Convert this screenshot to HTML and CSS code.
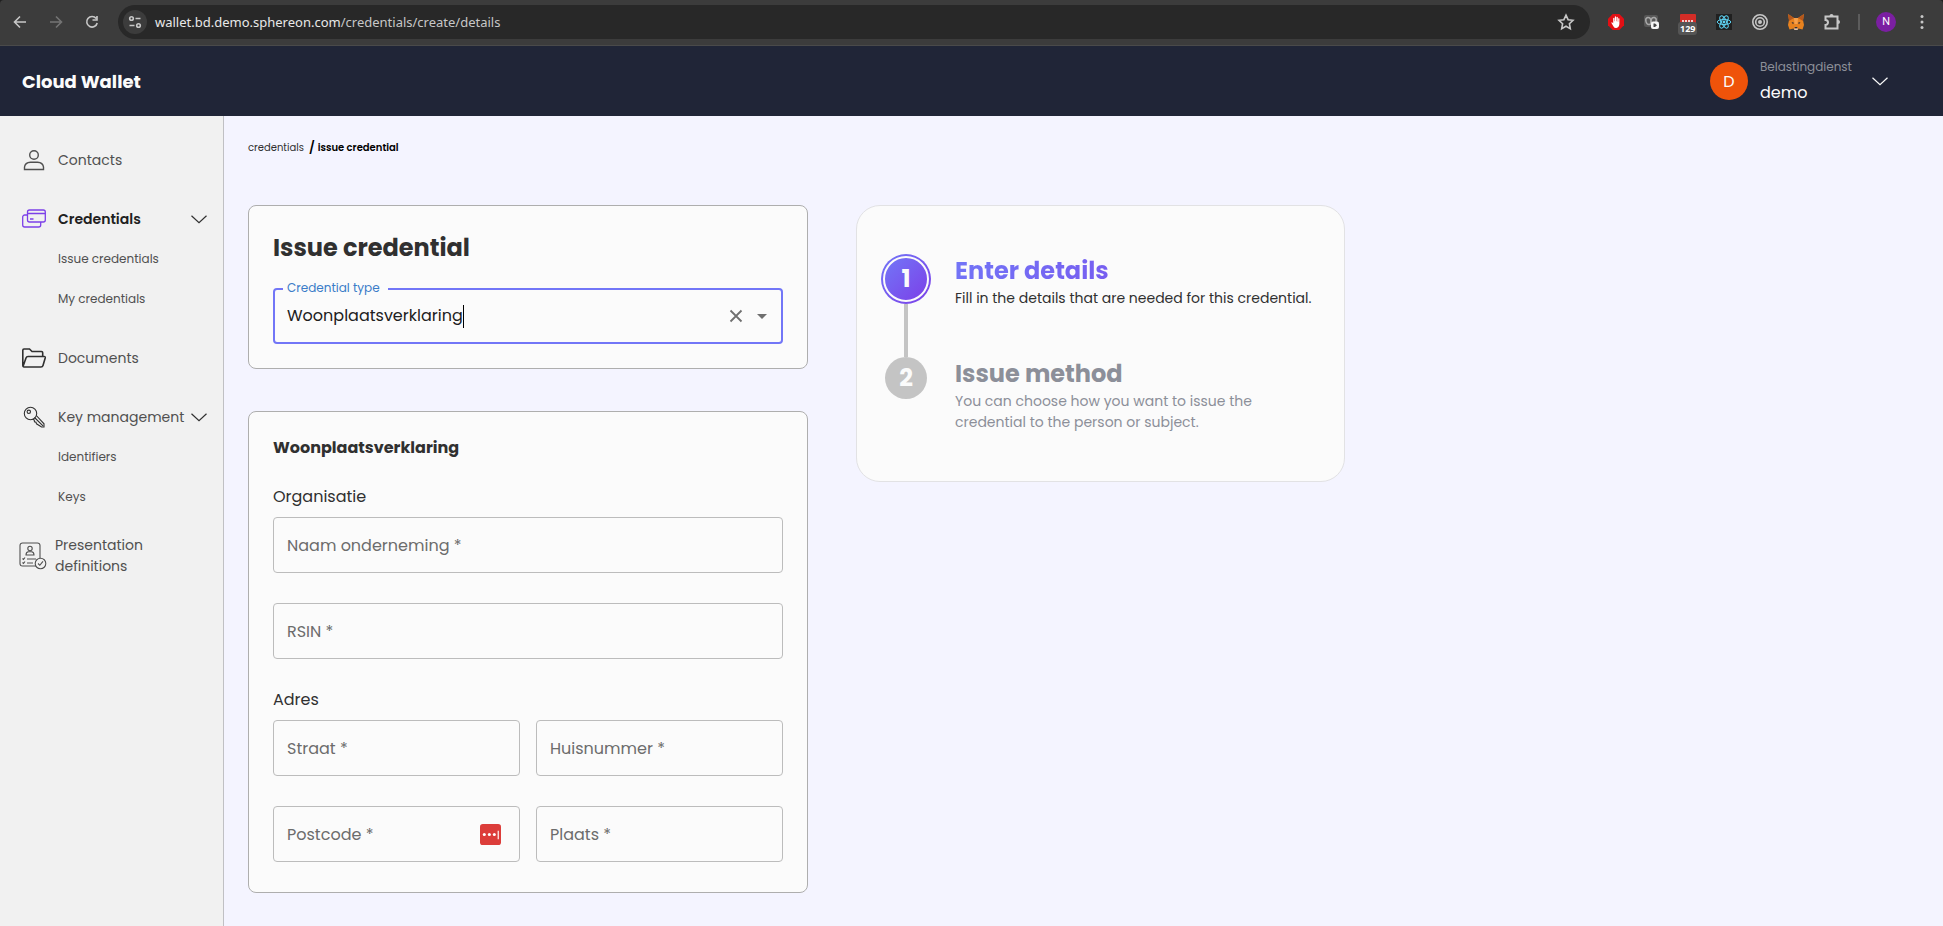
FILE: index.html
```html
<!DOCTYPE html>
<html lang="en">
<head>
<meta charset="utf-8">
<title>Cloud Wallet</title>
<link rel="stylesheet" href="styles.css">
</head>
<body>
<div class="browser">
  <div class="toolbar">
    <button class="tool" aria-label="Back"><svg viewBox="0 0 20 20"><path d="M16 10H5M10 4.500 4.500 10l5.500 5.500"/></svg></button>
    <button class="tool tool-off" aria-label="Forward" disabled><svg viewBox="0 0 20 20"><path d="M4 10h11M10 4.500l5.500 5.500-5.500 5.500"/></svg></button>
    <button class="tool" aria-label="Reload"><svg viewBox="0 0 20 20"><path d="M14.200 6.500A5.300 5.300 0 1 0 15.200 11M15 4v4h-4.500"/></svg></button>
    <div class="omnibox">
      <button class="site" aria-label="Site information"><svg viewBox="0 0 20 20"><circle cx="6.500" cy="6.500" r="1.800"/><path d="M10.500 6.500h5M4.500 13.500h5"/><circle cx="13.500" cy="13.500" r="1.800"/></svg></button>
      <div class="url"><span class="host">wallet.bd.demo.sphereon.com</span>/credentials/create/details</div>
      <button class="tool" aria-label="Bookmark"><svg viewBox="0 0 20 20"><path class="star" d="M10 3.200l2.100 4.500 4.900.600-3.600 3.400.900 4.900-4.300-2.400-4.300 2.400.900-4.900L3 8.300l4.900-.600z"/></svg></button>
    </div>
    <button class="tool" aria-label="Ad blocker"><svg class="solid" viewBox="0 0 20 20"><path fill="#e30f14" d="M6.700 2h6.600L18 6.700v6.600L13.300 18H6.700L2 13.300V6.700z"/><path fill="#fff" d="M7.500 14.500 5.300 10.800q.4-1 1.400 0l.5.700V6.200q.6-.9 1.200 0v3h.4V4.800q.7-.9 1.300 0v4.400h.4V5.200q.7-.8 1.300 0v4.500h.4V6.600q.6-.8 1.200 0v5.400q-.3 3.600-3 4-2 .2-2.900-1.500z"/></svg></button>
    <button class="tool" aria-label="Extension"><svg class="solid" viewBox="0 0 20 20"><rect x="2" y="3" width="14" height="12" rx="2" fill="#575757"/><g fill="none" stroke="#a8a8a8" stroke-width="1.500"><ellipse cx="6.500" cy="9" rx="2.600" ry="3.600" transform="rotate(-15 6.500 9)"/><ellipse cx="11.500" cy="9" rx="2.600" ry="3.600" transform="rotate(15 11.500 9)"/></g><rect x="9" y="9.500" width="8" height="7.500" rx="2" fill="#f5f5f5"/><path fill="#444" d="M11.500 11.500h1.500l2 1.800-2 1.800h-1.500z"/></svg></button>
    <button class="tool counter" aria-label="Password manager, 129"><svg class="solid" viewBox="0 0 20 20"><rect x="2" y="2" width="16" height="16" rx="1" fill="#d32d27"/><path stroke="#fff" stroke-dasharray="2 1" d="M4 9h11"/></svg><span class="count">129</span></button>
    <button class="tool" aria-label="React tools"><svg class="solid" viewBox="0 0 20 20"><path fill="#202020" d="M2 2h16v16H2z"/><g fill="none" stroke="#5ed3f3" stroke-width="1"><ellipse cx="10" cy="10" rx="6.800" ry="2.600"/><ellipse cx="10" cy="10" rx="6.800" ry="2.600" transform="rotate(60 10 10)"/><ellipse cx="10" cy="10" rx="6.800" ry="2.600" transform="rotate(120 10 10)"/></g><circle cx="10" cy="10" r="1.400" fill="#5ed3f3"/></svg></button>
    <button class="tool" aria-label="Target extension"><svg viewBox="0 0 20 20"><circle cx="10" cy="10" r="7.200"/><circle cx="10" cy="10" r="4.300"/><circle cx="10" cy="10" r="1.200" fill="#c7c7c7"/></svg></button>
    <button class="tool" aria-label="Fox wallet"><svg class="solid" viewBox="0 0 20 20"><path fill="#e8821e" d="M2 2l6 4h4l6-4-1 6 1 5-1.500 4.500-4-1-1 1.500h-3l-1-1.500-4 1L2 13l1-5z"/><path fill="#b5571c" d="M2 2l6 4-5 3zM18 2l-6 4 5 3z"/><path fill="#f6a04c" d="M8 6h4l-.5 6h-3z"/><path fill="#2e2e3a" d="M5.500 10l2.500.8L7 12.300zM14.500 10l-2.500.8 1 1.500zM8.700 15h2.600v1.500H8.700z"/><path fill="#d9c4b3" d="M8 16.500h4l-.5 1.500h-3z"/></svg></button>
    <button class="tool" aria-label="Extensions"><svg viewBox="0 0 20 20"><path class="bold" d="M3.500 4.500h12v12h-12V13a2.400 2.400 0 0 0 0-5z"/><path fill="#c7c7c7" stroke="none" d="M7.500 4a2 2 0 0 1 4 0zM16 8a2 2 0 0 1 0 4z"/></svg></button>
    <span class="rule"></span>
    <button class="profile" aria-label="Profile">N</button>
    <button class="tool" aria-label="Menu"><svg class="solid" viewBox="0 0 20 20"><g fill="#c7c7c7"><circle cx="10" cy="4.500" r="1.500"/><circle cx="10" cy="10" r="1.500"/><circle cx="10" cy="15.500" r="1.500"/></g></svg></button>
  </div>
</div>

<header class="header">
  <div class="brand">Cloud Wallet</div>
  <div class="user">
    <span class="avatar">D</span>
    <div class="who"><span class="org">Belastingdienst</span><span class="name">demo</span></div>
    <button class="more" aria-label="Account menu"><svg class="chev" viewBox="0 0 16 9"><path d="M0.500 0.800 8 7.800l7.500-7"/></svg></button>
  </div>
</header>

<div class="shell">
  <nav class="side">
    <div class="group">
      <a class="item" href="#"><svg class="icon" viewBox="0 0 24 24"><circle cx="12" cy="7" r="4.300"/><path d="M2.500 21.500v-2.500q.5-4.500 6-4.800h7q5.500.3 6 4.800v2.500z"/></svg>Contacts</a>
    </div>
    <div class="group">
      <a class="item current" href="#"><svg class="icon violet" viewBox="0 0 24 24"><rect x="5.500" y="3" width="17.800" height="12" rx="2"/><path d="M5.500 6.500h17.800M8 12h3.500M5.500 8H2.700a2 2 0 0 0-2 2v8a2 2 0 0 0 2 2h14a2 2 0 0 0 2-2v-3"/></svg>Credentials<svg class="chev" viewBox="0 0 16 9"><path d="M0.500 0.800 8 7.800l7.500-7"/></svg></a>
      <a class="sub" href="#">Issue credentials</a>
      <a class="sub" href="#">My credentials</a>
    </div>
    <div class="group">
      <a class="item" href="#"><svg class="icon dark" viewBox="0 0 24 24"><path d="M.800 19V4.200a1.200 1.200 0 0 1 1.200-1.200h5.500l2.500 2.500h9.500a1.200 1.200 0 0 1 1.200 1.200V10M1 20.500 4 12q.5-1.500 2-1.500h16q1.600 0 1.200 1.500L21 19.500q-.4 1.500-2 1.500H2q-1.200 0-1.200-2"/></svg>Documents</a>
    </div>
    <div class="group">
      <a class="item" href="#"><svg class="icon thin" viewBox="0 0 24 24"><circle cx="8.500" cy="8.500" r="6.200"/><circle cx="6.800" cy="6.800" r="1.700"/><path d="M10.500 14.300l1.700.7.300 1.800 1.500.5.500 1.500 5 3.200h2.500v-3.200L14.300 10.500M12.500 12.500l8.500 8.300"/></svg>Key management<svg class="chev" viewBox="0 0 16 9"><path d="M0.500 0.800 8 7.800l7.500-7"/></svg></a>
      <a class="sub" href="#">Identifiers</a>
      <a class="sub" href="#">Keys</a>
    </div>
    <div class="group">
      <a class="item wide" href="#"><svg class="icon large" viewBox="0 0 28 28"><path d="M17 24H3.500A2.500 2.500 0 0 1 1 21.500v-18A2.500 2.500 0 0 1 3.500 1h15A2.500 2.500 0 0 1 21 3.500V16"/><circle cx="11" cy="6.500" r="2.200"/><path d="M7 13q0-3 2.500-3.200h3Q15 10 15 13zM3.500 16.500l1 1 1.500-2M8 17h9M3.500 20.500l1 1 1.500-2M8 21h6"/><circle cx="21.500" cy="21.500" r="5.300"/><path d="M19 21.500l1.800 1.800 3.200-4"/></svg><span>Presentation definitions</span></a>
    </div>
  </nav>

  <main class="main">
    <div class="crumbs"><a href="#">credentials</a><span class="slash">/</span><strong>issue credential</strong></div>
    <div class="columns">
      <form class="form">
        <section class="card">
          <h1 class="title">Issue credential</h1>
          <div class="combo">
            <label class="float" for="type">Credential type</label>
            <input class="value" id="type" type="text" value="Woonplaatsverklaring">
            <span class="caret"></span>
            <button class="clear" type="button" aria-label="Clear"><svg viewBox="0 0 20 20"><path d="M4.500 4.500l11 11M15.500 4.500l-11 11" fill="none" stroke="#6f6f6f" stroke-width="1.800"/></svg></button>
            <button class="clear" type="button" aria-label="Open"><svg viewBox="0 0 20 20"><path d="M5 8h10l-5 5z" fill="#6f6f6f"/></svg></button>
          </div>
        </section>
        <section class="card details">
          <h2 class="subtitle">Woonplaatsverklaring</h2>
          <fieldset class="fields">
            <legend class="legend">Organisatie</legend>
            <div class="field full"><input id="naam" type="text" placeholder=" "><label for="naam">Naam onderneming *</label></div>
            <div class="field full"><input id="rsin" type="text" placeholder=" "><label for="rsin">RSIN *</label></div>
          </fieldset>
          <fieldset class="fields">
            <legend class="legend">Adres</legend>
            <div class="field"><input id="straat" type="text" placeholder=" "><label for="straat">Straat *</label></div>
            <div class="field"><input id="nummer" type="text" placeholder=" "><label for="nummer">Huisnummer *</label></div>
            <div class="field"><input id="postcode" type="text" placeholder=" "><label for="postcode">Postcode *</label><button class="fill" type="button" aria-label="Fill in"><svg viewBox="0 0 22 22"><rect width="22" height="22" rx="3" fill="#dc3d3a"/><g fill="#fff"><circle cx="4.500" cy="11" r="1.600"/><circle cx="9.800" cy="11" r="1.600"/><circle cx="15" cy="11" r="1.600"/><path d="M18.500 7h1.200v9h-1.200z"/></g></svg></button></div>
            <div class="field"><input id="plaats" type="text" placeholder=" "><label for="plaats">Plaats *</label></div>
          </fieldset>
        </section>
      </form>
      <ol class="steps">
        <li class="step active">
          <div class="track"><span class="ring"><span class="dot">1</span></span></div>
          <div class="text"><h3>Enter details</h3><p>Fill in the details that are needed for this credential.</p></div>
        </li>
        <li class="step">
          <div class="track"><span class="dot">2</span></div>
          <div class="text"><h3>Issue method</h3><p>You can choose how you want to issue the credential to the person or subject.</p></div>
        </li>
      </ol>
    </div>
  </main>
</div>
</body>
</html>
```

FILE: styles.css
```css
* { box-sizing: border-box; }
body {
  margin: 0;
  min-height: 100vh;
  display: flex;
  flex-direction: column;
  font-family: Poppins, Inter, "Open Sans", sans-serif;
  font-size: 16px;
  color: #303030;
  background: #f4f4ff;
}
button { border: 0; padding: 0; background: none; font: inherit; color: inherit; }
a { color: inherit; text-decoration: none; }
svg { display: block; }
h1, h2, h3, p { margin: 0; }

/* Browser toolbar */
.browser { background: #1f1f1f; }
.toolbar {
  display: flex;
  align-items: center;
  gap: 16px;
  height: 46px;
  padding: 0 11px 2px 10px;
  background: #3c3c3c;
  border-bottom: 1px solid #4a4a4a;
  border-radius: 4px 4px 0 0;
}
.tool { position: relative; flex: none; width: 20px; height: 20px; }
.toolbar svg { width: 20px; height: 20px; fill: none; stroke: #c7c7c7; stroke-width: 1.600; }
.toolbar .solid { stroke: none; }
.toolbar .bold { stroke-width: 2; }
.tool-off { opacity: 0.4; }
.omnibox {
  flex: 1;
  display: flex;
  align-items: center;
  height: 34px;
  padding: 0 14px 0 5px;
  border-radius: 17px;
  background: #282828;
}
.site {
  display: grid;
  place-items: center;
  width: 24px;
  height: 24px;
  margin-right: 8px;
  border-radius: 50%;
  background: #3c3c3c;
}
.url { flex: 1; font: 13px/20px "Noto Sans", sans-serif; color: #c7c7c7; }
.host { color: #e8e8e8; }
.count {
  position: absolute;
  top: 10px;
  left: 0;
  padding: 0 2px;
  border-radius: 3px;
  background: #555;
  color: #fff;
  font: bold 9px/13px "Open Sans", sans-serif;
}
.rule { width: 2px; height: 16px; background: #5c5c5c; }
.profile {
  width: 20px;
  height: 20px;
  border-radius: 50%;
  background: #7b1fa2;
  color: #fff;
  font-size: 11px;
}

/* App header */
.header {
  display: flex;
  align-items: center;
  justify-content: space-between;
  height: 70px;
  padding: 0 55px 0 22px;
  background: #202537;
  color: #fbfbfb;
}
.brand { font-size: 18px; font-weight: 700; }
.user { display: flex; align-items: center; }
.avatar {
  display: grid;
  place-items: center;
  width: 38px;
  height: 38px;
  margin-right: 12px;
  border-radius: 50%;
  background: #ef530a;
}
.who { display: flex; flex-direction: column; gap: 5px; margin-right: 20px; }
.org { font-size: 12px; line-height: 18px; color: #8d9099; }
.name { line-height: 24px; }
.chev { width: 16px; height: 9px; fill: none; stroke: currentColor; stroke-width: 1.200; }

/* Navigation */
.shell { flex: 1; display: flex; }
.side {
  flex: none;
  width: 224px;
  padding: 24px 16px 24px 22px;
  display: flex;
  flex-direction: column;
  gap: 19px;
  background: #f1f1f1;
  border-right: 1px solid #c0c0c4;
  color: #505050;
}
.item { display: flex; align-items: center; height: 40px; font-size: 14px; line-height: 21px; white-space: nowrap; }
.item .chev { margin-left: auto; color: #303030; }
.icon { flex: none; width: 24px; height: 24px; margin-right: 12px; fill: none; stroke: #505050; stroke-width: 1.400; }
.violet { stroke: #7c40e8; stroke-width: 1.300; }
.dark { stroke: #303030; stroke-width: 1.600; }
.thin { stroke: #303030; stroke-width: 1.100; }
.current { font-weight: 600; color: #202020; }
.sub { display: flex; align-items: center; height: 40px; padding-left: 36px; font-size: 12px; }
.wide { margin-left: -3px; white-space: normal; }
.large { width: 28px; height: 28px; margin-right: 8px; stroke-width: 1.100; }

/* Content */
.main { flex: 1; min-width: 0; padding: 23px 24px; }
.crumbs { display: flex; align-items: center; height: 18px; font-size: 10px; color: #303030; }
.crumbs strong { font-weight: 600; color: #000; }
.slash { margin: 0 3px 0 5px; font-size: 12px; font-weight: 600; color: #000; }
.columns { display: flex; align-items: flex-start; gap: 48px; margin-top: 48px; }
.form { flex: 0 1 560px; display: flex; flex-direction: column; gap: 42px; }
.card { padding: 24px; border: 1px solid #aeaeae; border-radius: 8px; background: #fbfbfb; }
.title { margin-bottom: 23px; font-size: 24px; line-height: 35px; font-weight: 700; }
.combo {
  position: relative;
  display: flex;
  align-items: center;
  height: 56px;
  padding: 0 9px 0 12px;
  border: 2px solid #7276f7;
  border-radius: 4px;
}
.float {
  position: absolute;
  top: -12px;
  left: 8px;
  padding: 0 8px 0 4px;
  background: #fbfbfb;
  font-size: 12px;
  line-height: 20px;
  color: #3a7cc8;
}
.value { field-sizing: content; min-width: 0; padding: 0; border: 0; outline: 0; background: none; font: inherit; line-height: 24px; color: #202020; }
.caret { width: 1px; height: 23px; margin-right: auto; background: #000; }
.clear { width: 20px; height: 20px; margin-left: 6px; }
.clear svg { width: 20px; height: 20px; }
.details { padding-bottom: 30px; }
.subtitle { margin-bottom: 25px; font-size: 16px; line-height: 24px; font-weight: 700; }
.fields { display: grid; grid-template-columns: 1fr 1fr; gap: 30px 16px; margin: 0; padding: 0; border: 0; min-width: 0; }
.fields + .fields { margin-top: 29px; }
.legend { padding: 0; margin-bottom: 8px; font-size: 16px; line-height: 24px; }
.full { grid-column: 1 / -1; }
.field { display: grid; align-items: center; }
.field > * { grid-area: 1 / 1; }
.field input {
  width: 100%;
  height: 56px;
  padding: 0 14px;
  border: 1px solid #bcbcbc;
  border-radius: 4px;
  background: none;
  font: inherit;
}
.field label { padding-left: 14px; color: #6c6c6c; pointer-events: none; }
.field input:not(:placeholder-shown) + label { visibility: hidden; }
.fill { justify-self: end; width: 21px; height: 21px; margin-right: 19px; }

/* Progress steps */
.steps {
  flex: 0 1 489px;
  margin: 0;
  padding: 48px 24px;
  list-style: none;
  border: 1px solid #e2e2e4;
  border-radius: 24px;
  background: #fbfbfb;
}
.step { display: flex; gap: 24px; color: #8c8f99; }
.active { color: #303030; }
.track { flex: none; width: 50px; display: flex; flex-direction: column; align-items: center; }
.active .track::after { content: ""; flex: 1; width: 4px; background: #c4c4c4; }
.ring { padding: 2px; border-radius: 50%; background: linear-gradient(135deg, #7276f7, #7c40e8); }
.dot {
  display: grid;
  place-items: center;
  width: 42px;
  height: 42px;
  border-radius: 50%;
  background: #c4c4c4;
  color: #fbfbfb;
  font-size: 24px;
  line-height: 36px;
  font-weight: 700;
}
.ring .dot { width: 46px; height: 46px; border: 2px solid #fbfbfb; background: linear-gradient(135deg, #7276f7, #7c40e8) padding-box; }
.text { max-width: 360px; }
.active .text { padding-bottom: 48px; }
.text h3 { font-size: 24px; line-height: 34px; font-weight: 700; }
.active h3 { color: transparent; background: linear-gradient(135deg, #7276f7, #7c40e8); background-clip: text; }
.text p { font-size: 14px; line-height: 21px; }
.step:not(.active) .text { max-width: 320px; }
```
